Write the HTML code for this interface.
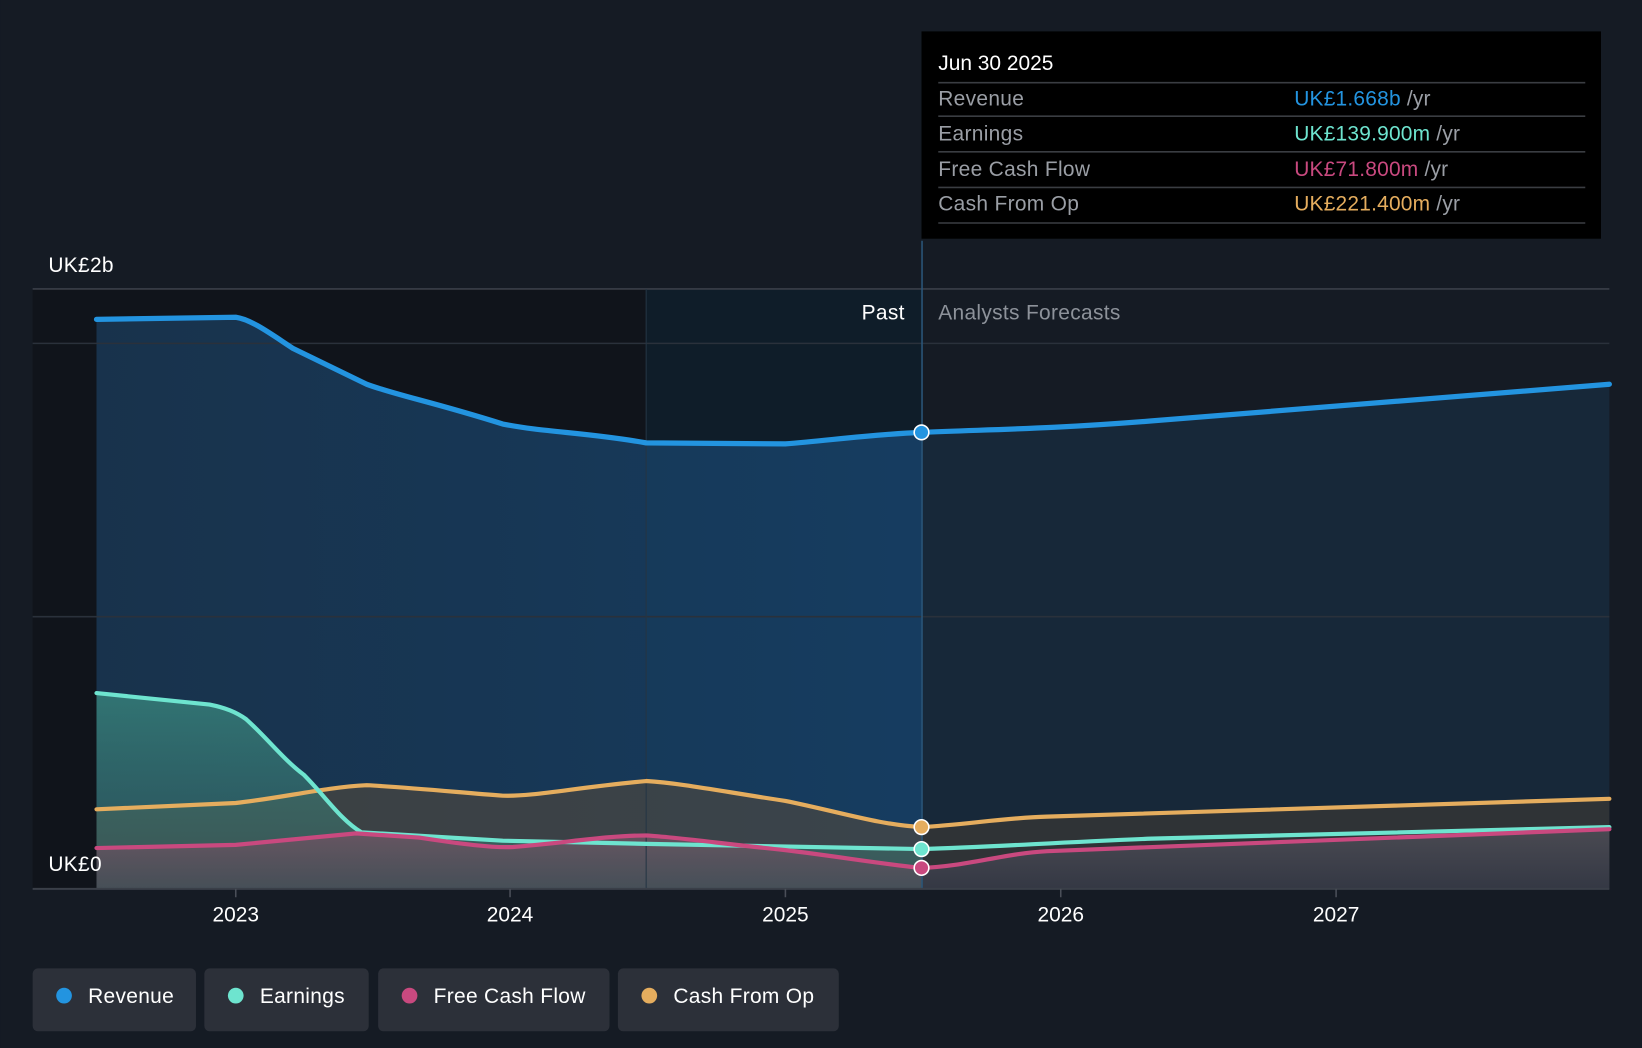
<!DOCTYPE html>
<html><head><meta charset="utf-8"><style>
html,body{margin:0;padding:0;background:#151b24;overflow:hidden}
svg{display:block}
text{font-family:"Liberation Sans",sans-serif}
</style></head><body>
<svg width="1642" height="1048" viewBox="0 0 1568 1001" xmlns="http://www.w3.org/2000/svg">
<defs>
<linearGradient id="past" x1="0" y1="0" x2="1" y2="0">
<stop offset="0" stop-color="#1a3a58" stop-opacity="0.8"/><stop offset="1" stop-color="#17426a" stop-opacity="0.85"/>
</linearGradient>
<linearGradient id="earn" x1="0" y1="0" x2="0" y2="1">
<stop offset="0" stop-color="#3a8a80" stop-opacity="0.75"/><stop offset="1" stop-color="#3a6a66" stop-opacity="0.5"/>
</linearGradient>
<linearGradient id="bot" x1="0" y1="0" x2="0" y2="1">
<stop offset="0" stop-color="#6e5462" stop-opacity="0.85"/><stop offset="1" stop-color="#4a4d58" stop-opacity="0.75"/>
</linearGradient>
<linearGradient id="botf" x1="0" y1="0" x2="0" y2="1">
<stop offset="0" stop-color="#4a4a52"/><stop offset="1" stop-color="#343844"/>
</linearGradient>
</defs>
<rect width="1568" height="1001" fill="#151b24"/>
<rect x="31" y="276" width="586" height="573" fill="#10141b"/>
<rect x="617" y="276" width="263" height="573" fill="#0f1d29"/>
<path d="M92,305 L225,303 C240,305 260,320 280,333 L350,367 C380,378 410,383 480,405 C520,413 560,413 617,423 L750,424 C790,421 830,415 880,413 L880,849 L92,849Z" fill="url(#past)"/>
<path d="M880,413 C950,410 1000,410 1100,402 L1537,367 L1537,849 L880,849Z" fill="#172839"/>
<path d="M92,773 L225,767 C270,762 310,752 350,750 C390,752 440,757 480,760 C510,761 550,752 617,746 C650,748 690,756 750,765 C800,775 840,788 880,790 L880,849 L92,849Z" fill="#5a4a3a" fill-opacity="0.55"/>
<path d="M880,790 C920,788 960,781 1000,780 L1537,763 L1537,849 L880,849Z" fill="#2f3336"/>
<path d="M92,662 L200,673 C215,676 225,680 235,687 C255,705 270,725 290,740 C310,760 325,783 345,795 L480,803 L617,806 L880,811 L880,849 L92,849Z" fill="url(#earn)"/>
<path d="M92,810 L225,807 L340,796 L400,800 C440,806 470,810 490,809 C540,805 580,798 617,798 C650,800 690,806 750,812 C800,818 840,825 880,829 L880,849 L92,849Z" fill="url(#bot)"/>
<path d="M880,829 C920,828 960,815 1000,813 L1537,792 L1537,849 L880,849Z" fill="url(#botf)"/>
<line x1="31" y1="276" x2="1537" y2="276" stroke="#3a3f48" stroke-width="1.5"/>
<line x1="31" y1="328" x2="1537" y2="328" stroke="#2a313b" stroke-width="1.5"/>
<line x1="31" y1="589" x2="1537" y2="589" stroke="#2a313b" stroke-width="1.5"/>
<line x1="617" y1="276" x2="617" y2="849" stroke="#243544" stroke-width="1"/>
<line x1="880.5" y1="230" x2="880.5" y2="849" stroke="#2a5578" stroke-width="1.5"/>
<line x1="31" y1="849" x2="1537" y2="849" stroke="#3a3f48" stroke-width="2"/>
<g stroke="#4a4f58" stroke-width="1.5">
<line x1="225" y1="849" x2="225" y2="857"/><line x1="487" y1="849" x2="487" y2="857"/><line x1="750" y1="849" x2="750" y2="857"/><line x1="1013" y1="849" x2="1013" y2="857"/><line x1="1276" y1="849" x2="1276" y2="857"/>
</g>
<g fill="none" stroke-width="4" stroke-linecap="round">
<path d="M92,773 L225,767 C270,762 310,752 350,750 C390,752 440,757 480,760 C510,761 550,752 617,746 C650,748 690,756 750,765 C800,775 840,788 880,790 C920,788 960,781 1000,780 L1537,763" stroke="#e5ad5e"/>
<path d="M92,662 L200,673 C215,676 225,680 235,687 C255,705 270,725 290,740 C310,760 325,783 345,795 L480,803 L617,806 L880,811 C950,809 1000,805 1100,801 L1537,790" stroke="#6ee4cf"/>
<path d="M92,810 L225,807 L340,796 L400,800 C440,806 470,810 490,809 C540,805 580,798 617,798 C650,800 690,806 750,812 C800,818 840,825 880,829 C920,828 960,815 1000,813 L1537,792" stroke="#c9497f"/>
<path d="M92,305 L225,303 C240,305 260,320 280,333 L350,367 C380,378 410,383 480,405 C520,413 560,413 617,423 L750,424 C790,421 830,415 880,413 C950,410 1000,410 1100,402 L1537,367" stroke="#2394e0" stroke-width="5"/>
</g>
<g stroke="#fff" stroke-width="1.5">
<circle cx="880" cy="413" r="7" fill="#2394e0"/>
<circle cx="880" cy="790" r="7" fill="#e5ad5e"/>
<circle cx="880" cy="811" r="7" fill="#6ee4cf"/>
<circle cx="880" cy="829" r="7" fill="#c9497f"/>
</g>
<g font-size="20" letter-spacing="0.3">
<text x="46" y="260" fill="#fff">UK£2b</text>
<text x="46" y="832" fill="#fff">UK£0</text>
<text x="864" y="305" fill="#fff" text-anchor="end">Past</text>
<text x="896" y="305" fill="#8d929a">Analysts Forecasts</text>
</g>
<g fill="#fff" font-size="20" text-anchor="middle">
<text x="225" y="880">2023</text><text x="487" y="880">2024</text><text x="750" y="880">2025</text><text x="1013" y="880">2026</text><text x="1276" y="880">2027</text>
</g>
<rect x="880" y="30" width="649" height="198" fill="#000"/>
<text x="896" y="67" fill="#fff" font-size="20">Jun 30 2025</text>
<g stroke="#3a3d42" stroke-width="1.5">
<line x1="896" y1="79" x2="1514" y2="79"/><line x1="896" y1="111" x2="1514" y2="111"/><line x1="896" y1="145" x2="1514" y2="145"/><line x1="896" y1="179" x2="1514" y2="179"/><line x1="896" y1="213" x2="1514" y2="213"/>
</g>
<g font-size="20" fill="#9a9ea5" letter-spacing="0.3">
<text x="896" y="101">Revenue</text><text x="896" y="134">Earnings</text><text x="896" y="168">Free Cash Flow</text><text x="896" y="201">Cash From Op</text>
</g>
<g font-size="20" letter-spacing="0.2">
<text x="1236" y="101"><tspan fill="#2394e0">UK£1.668b</tspan><tspan fill="#9a9ea5"> /yr</tspan></text>
<text x="1236" y="134"><tspan fill="#6ee4cf">UK£139.900m</tspan><tspan fill="#9a9ea5"> /yr</tspan></text>
<text x="1236" y="168"><tspan fill="#c9497f">UK£71.800m</tspan><tspan fill="#9a9ea5"> /yr</tspan></text>
<text x="1236" y="201"><tspan fill="#e5ad5e">UK£221.400m</tspan><tspan fill="#9a9ea5"> /yr</tspan></text>
</g>
<g fill="#2c3039">
<rect x="31" y="925" width="156" height="60" rx="5"/><rect x="195" y="925" width="157" height="60" rx="5"/><rect x="361" y="925" width="221" height="60" rx="5"/><rect x="590" y="925" width="211" height="60" rx="5"/>
</g>
<circle cx="61" cy="951" r="7.5" fill="#2394e0"/>
<circle cx="225" cy="951" r="7.5" fill="#6ee4cf"/>
<circle cx="391" cy="951" r="7.5" fill="#c9497f"/>
<circle cx="620" cy="951" r="7.5" fill="#e5ad5e"/>
<g fill="#fff" font-size="20" letter-spacing="0.3">
<text x="84" y="958">Revenue</text><text x="248" y="958">Earnings</text><text x="414" y="958">Free Cash Flow</text><text x="643" y="958">Cash From Op</text>
</g>
</svg>
</body></html>
